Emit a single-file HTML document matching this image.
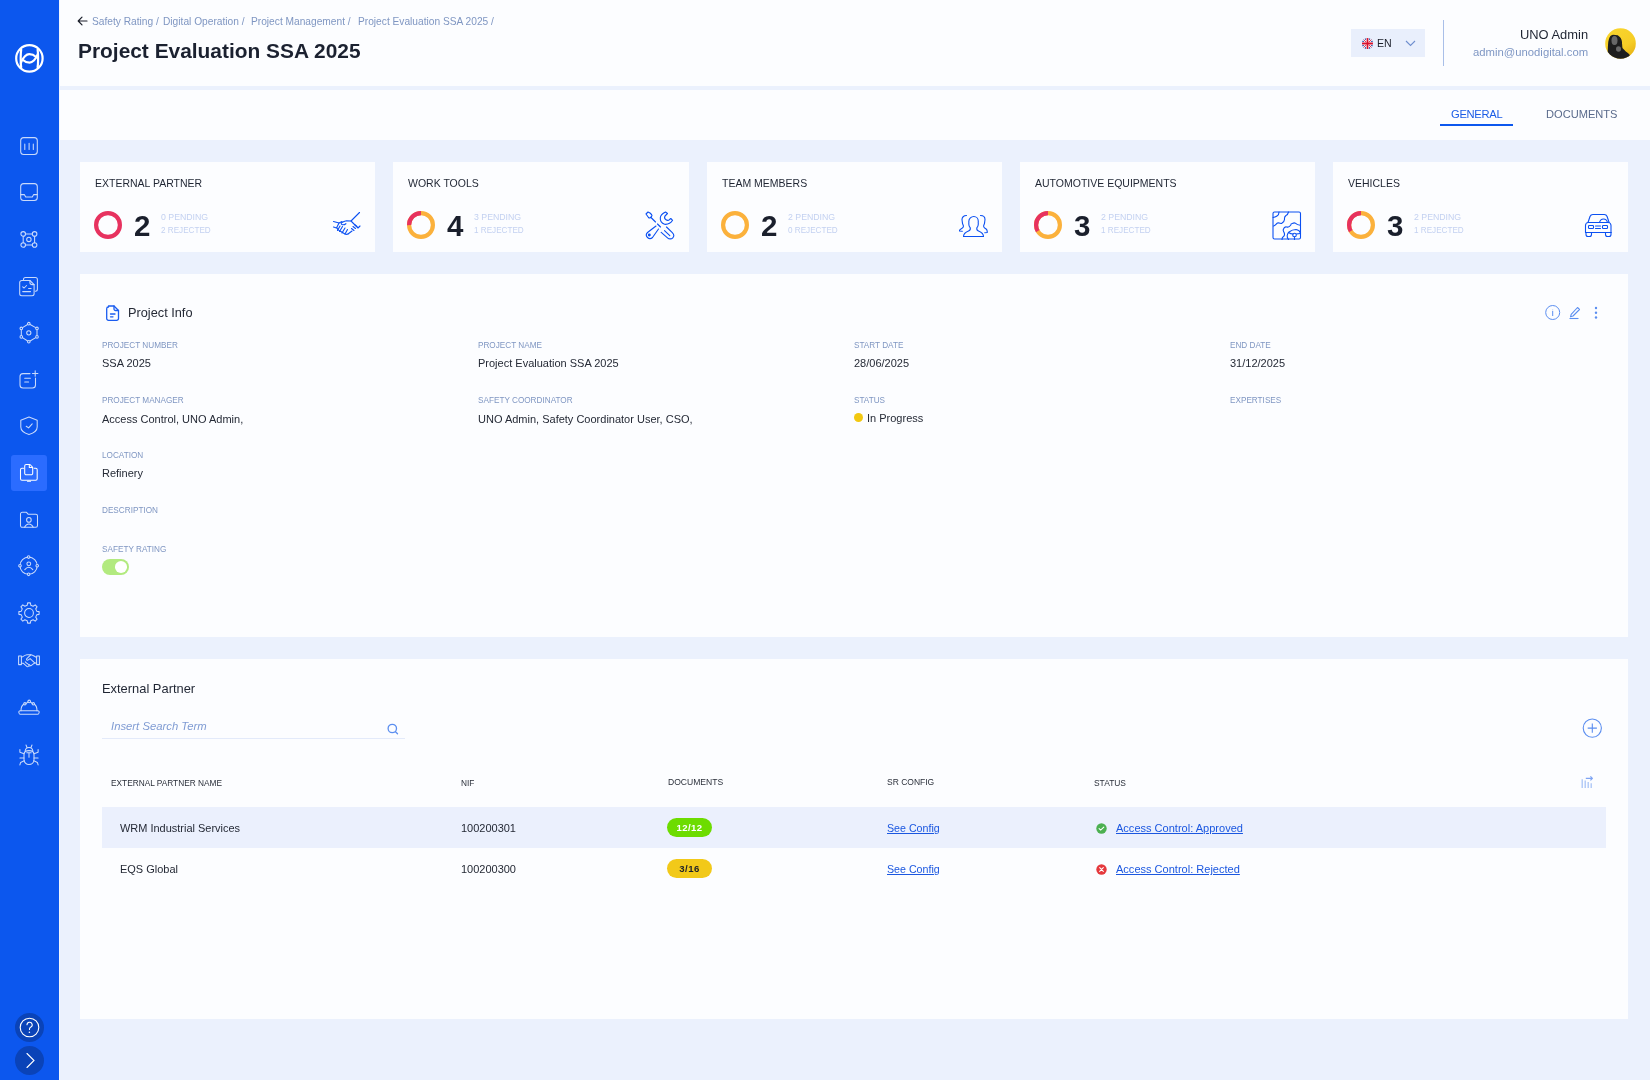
<!DOCTYPE html>
<html><head><meta charset="utf-8"><title>Project Evaluation SSA 2025</title>
<style>
*{box-sizing:border-box;margin:0;padding:0}
html,body{width:1650px;height:1080px;overflow:hidden}
body{font-family:"Liberation Sans",sans-serif;background:#ebf1fd;color:#1f2533;position:relative}
.abs{position:absolute}
.t{position:absolute;white-space:nowrap;line-height:1;will-change:transform}
</style></head>
<body>
<div class="abs" style="left:0px;top:0px;width:59px;height:1080px;background:#0c57ee;"></div>
<div class="abs" style="left:59px;top:0px;width:1px;height:1080px;background:#f1f5fe;"></div>
<div class="abs" style="left:60px;top:0px;width:1590px;height:86px;background:#fcfdff;"></div>
<div class="abs" style="left:60px;top:90px;width:1590px;height:50px;background:#fcfdff;"></div>
<svg class="abs" style="left:14px;top:43px;" width="30" height="30" viewBox="0 0 30 30"><g fill="none" stroke="#fff" stroke-width="2.2" stroke-linecap="round"><circle cx="15.4" cy="15.4" r="13.2"/><path d="M7.2 6.6C6.5 10.5 6.5 20.3 7.2 24.2"/><path d="M23.6 6.6C24.3 10.5 24.3 20.3 23.6 24.2"/><path d="M6.9 20C9 13.8 12.8 11.2 15.2 11.2C18 11.2 20.3 12.3 21.8 13.8"/><path d="M23.9 10.8C21.8 17 18 19.6 15.6 19.6C12.8 19.6 10.5 18.5 9 17"/></g></svg>
<div class="abs" style="left:11px;top:455px;width:36px;height:36px;background:#2b6cff;border-radius:3px;"></div>
<svg class="abs" style="left:16.5px;top:133.5px;" width="24" height="24" viewBox="0 0 24 24"><g fill="none" stroke="#fff" stroke-width="1.05" stroke-linecap="round" stroke-linejoin="round" opacity="0.78"><rect x="3.7" y="3.6" width="16.6" height="16.8" rx="3"/><path d="M7.8 10v5.4M12.1 9.2v6.2M16.3 10v5.4"/></g></svg>
<svg class="abs" style="left:16.5px;top:180.3px;" width="24" height="24" viewBox="0 0 24 24"><g fill="none" stroke="#fff" stroke-width="1.05" stroke-linecap="round" stroke-linejoin="round" opacity="0.78"><rect x="3.7" y="3.6" width="16.6" height="16.8" rx="3"/><path d="M3.7 14.6h3.6l1.4 2.4h6.6l1.4-2.4h3.6"/></g></svg>
<svg class="abs" style="left:16.5px;top:227.0px;" width="24" height="24" viewBox="0 0 24 24"><g fill="none" stroke="#fff" stroke-width="1.05" stroke-linecap="round" stroke-linejoin="round" opacity="0.78"><circle cx="6.2" cy="6.9" r="2.3"/><circle cx="17.6" cy="6.9" r="2.3"/><circle cx="6.2" cy="18" r="2.3"/><circle cx="17.6" cy="18" r="2.3"/><circle cx="11.9" cy="12.4" r="2.2"/><path d="M8.5 6.9h6.8M8.5 18h6.8M6.2 9.2v6.5M17.6 9.2v6.5"/></g></svg>
<svg class="abs" style="left:16.5px;top:273.8px;" width="24" height="24" viewBox="0 0 24 24"><g fill="none" stroke="#fff" stroke-width="1.05" stroke-linecap="round" stroke-linejoin="round" opacity="0.78"><path d="M6.5 5.5a2 2 0 0 1 2-2h9.9a2 2 0 0 1 2 2v9.8a2 2 0 0 1-2 2"/><path d="M4.7 6.5h8.2l4.2 4.1v9.2a2 2 0 0 1-2 2h-10.4a2 2 0 0 1-2-2v-11.3a2 2 0 0 1 2-2z"/><path d="M12.9 6.5v2.1a2 2 0 0 0 2 2h2.2M5.7 12.9l1.4 1.1 2.5-2.5M11.6 14.5h2.5M5.7 17.6h7.8"/></g></svg>
<svg class="abs" style="left:16.5px;top:320.6px;" width="24" height="24" viewBox="0 0 24 24"><g fill="none" stroke="#fff" stroke-width="1.05" stroke-linecap="round" stroke-linejoin="round" opacity="0.78"><path d="M11.8 2.7L20 7.4V15.9L11.8 20.7L4.3 15.9V7.4Z"/><circle cx="11.8" cy="11.8" r="2.1"/><g fill="#0c57ee"><circle cx="11.8" cy="2.7" r="1.3"/><circle cx="20" cy="7.4" r="1.3"/><circle cx="20" cy="15.9" r="1.3"/><circle cx="11.8" cy="20.7" r="1.3"/><circle cx="4.3" cy="15.9" r="1.3"/><circle cx="4.3" cy="7.4" r="1.3"/></g></g></svg>
<svg class="abs" style="left:16.5px;top:367.4px;" width="24" height="24" viewBox="0 0 24 24"><g fill="none" stroke="#fff" stroke-width="1.05" stroke-linecap="round" stroke-linejoin="round" opacity="0.78"><path d="M13 6.6H6a3 3 0 0 0-3 3v8.3a3 3 0 0 0 3 3h9.5a3 3 0 0 0 3-3V11"/><path d="M7.7 11.3h5.7M7.7 14.9h3.9M18.2 3.8v5.4M15.5 6.5h5.4"/></g></svg>
<svg class="abs" style="left:16.5px;top:414.1px;" width="24" height="24" viewBox="0 0 24 24"><g fill="none" stroke="#fff" stroke-width="1.05" stroke-linecap="round" stroke-linejoin="round" opacity="0.78"><path d="M12 3.1L20.2 6.2V13C20.2 16.5 16.5 19.2 12 20.6 7.5 19.2 3.8 16.5 3.8 13V6.2Z"/><path d="M9.2 12.2l2.4 1.7 3.6-4.1"/></g></svg>
<svg class="abs" style="left:16.5px;top:460.9px;" width="24" height="24" viewBox="0 0 24 24"><g fill="none" stroke="#fff" stroke-width="1.05" stroke-linecap="round" stroke-linejoin="round" opacity="1"><path d="M6.5 7.2H5a1.5 1.5 0 0 0-1.5 1.5v9a1.5 1.5 0 0 0 1.5 1.5h13.7a1.5 1.5 0 0 0 1.5-1.5v-9a1.5 1.5 0 0 0-1.5-1.5h-1.5"/><path d="M9.2 3.5h3.8l2.7 2.8v6a1.5 1.5 0 0 1-1.5 1.5h-5a1.5 1.5 0 0 1-1.5-1.5v-7.3a1.5 1.5 0 0 1 1.5-1.5z"/><path d="M12.3 3.6v2.9h3.3M10.5 20.3h3"/></g></svg>
<svg class="abs" style="left:16.5px;top:507.7px;" width="24" height="24" viewBox="0 0 24 24"><g fill="none" stroke="#fff" stroke-width="1.05" stroke-linecap="round" stroke-linejoin="round" opacity="0.78"><path d="M3.5 6a1.7 1.7 0 0 1 1.7-1.7h4.3l1.6 1.9h7.7a1.7 1.7 0 0 1 1.7 1.7v9.7a1.7 1.7 0 0 1-1.7 1.7h-13.6a1.7 1.7 0 0 1-1.7-1.7z"/><circle cx="11.9" cy="11.9" r="2.3"/><path d="M7.6 19.3c.9-2 2.4-3.2 4.3-3.2s3.4 1.2 4.3 3.2"/></g></svg>
<svg class="abs" style="left:16.5px;top:554.4px;" width="24" height="24" viewBox="0 0 24 24"><g fill="none" stroke="#fff" stroke-width="1.05" stroke-linecap="round" stroke-linejoin="round" opacity="0.78"><circle cx="11.6" cy="11.7" r="8.6"/><circle cx="11.8" cy="9.8" r="1.9"/><path d="M7.8 15.6c1.2-1.6 2.5-2.4 4-2.4s2.8.8 4 2.4"/><g fill="#0c57ee"><circle cx="11.6" cy="3.1" r="1.3"/><circle cx="20.2" cy="11.7" r="1.3"/><circle cx="11.6" cy="20.3" r="1.3"/><circle cx="3" cy="11.7" r="1.3"/></g></g></svg>
<svg class="abs" style="left:16.5px;top:601.2px;" width="24" height="24" viewBox="0 0 24 24"><g fill="none" stroke="#fff" stroke-width="1.05" stroke-linecap="round" stroke-linejoin="round" opacity="0.78"><path d="M10.16 4.32 L10.64 1.89 L13.36 1.89 L13.84 4.32 L16.13 5.26 L18.19 3.89 L20.11 5.81 L18.74 7.87 L19.68 10.16 L22.11 10.64 L22.11 13.36 L19.68 13.84 L18.74 16.13 L20.11 18.19 L18.19 20.11 L16.13 18.74 L13.84 19.68 L13.36 22.11 L10.64 22.11 L10.16 19.68 L7.87 18.74 L5.81 20.11 L3.89 18.19 L5.26 16.13 L4.32 13.84 L1.89 13.36 L1.89 10.64 L4.32 10.16 L5.26 7.87 L3.89 5.81 L5.81 3.89 L7.87 5.26Z"/><circle cx="12" cy="12" r="4.4"/></g></svg>
<svg class="abs" style="left:16.5px;top:648.0px;" width="24" height="24" viewBox="0 0 24 24"><g fill="none" stroke="#fff" stroke-width="1.05" stroke-linecap="round" stroke-linejoin="round" opacity="0.78"><rect x="1.6" y="8" width="2.8" height="8.6"/><rect x="19.6" y="8" width="2.8" height="8.6"/><path d="M4.4 9.3C6.5 8.5 8 7 10 6.8h3.8M19.6 9.3C17.6 8.5 16 7 14 6.8"/><path d="M13.8 6.8L9.8 10.6c-.7.8.2 2 1.1 1.5l2.2-1.5 4.9 4.6"/><path d="M4.4 15.2h1.8l3.6 3.2c.6.5 1.4.3 1.7-.3l.3-.4c.5.4 1.2.3 1.5-.2.5.3 1.1.2 1.4-.3l2-1.6 1.2-.6h1.7"/><path d="M8.3 13.8l1.5 1.5M10.4 15.5l1.3 1.3M12.4 16.6l.9.9"/></g></svg>
<svg class="abs" style="left:16.5px;top:694.7px;" width="24" height="24" viewBox="0 0 24 24"><g fill="none" stroke="#fff" stroke-width="1.05" stroke-linecap="round" stroke-linejoin="round" opacity="0.78"><path d="M3.2 15.7h17.6a1.4 1.4 0 0 1 1.3 1.8l-.3.9a1.4 1.4 0 0 1-1.3.9H3.5a1.4 1.4 0 0 1-1.3-.9l-.3-.9a1.4 1.4 0 0 1 1.3-1.8z"/><path d="M4 15.7C4 12.5 5.5 10 6.8 9.3M20 15.7C20 12.5 18.5 10 17.3 9.3M9 8.6 10.9 7M13.5 7 15.1 8.4"/><circle cx="7.9" cy="8.8" r="1.2"/><circle cx="12.2" cy="6.4" r="1.3"/><circle cx="16.3" cy="8.8" r="1.2"/></g></svg>
<svg class="abs" style="left:16.5px;top:741.5px;" width="24" height="24" viewBox="0 0 24 24"><g fill="none" stroke="#fff" stroke-width="1.05" stroke-linecap="round" stroke-linejoin="round" opacity="0.78"><path d="M7 12.5C7 9.8 9.2 8.6 12 8.6S17 9.8 17 12.5V17.5C17 20.5 14.8 22.5 12 22.5S7 20.5 7 17.5Z"/><path d="M8.2 8.9C8.4 6.9 10 5.5 12 5.5S15.6 6.9 15.8 8.9M10.1 5.8 9 3M13.9 5.8 15 3M9.8 10.7H14.2M12 10.7V15.2M2.9 7.6V10.2L7 11.8M21.1 7.6V10.2L17 11.8M2.9 15.9H7M21.1 15.9H17M7.2 18.8 3.6 20.4 2.9 22.9M16.8 18.8 20.4 20.4 21.1 22.9"/></g></svg>
<div class="abs" style="left:15px;top:1013px;width:29px;height:29px;border-radius:50%;background:#0a43b8"></div>
<svg class="abs" style="left:15px;top:1013px;" width="29" height="29" viewBox="0 0 29 29"><circle cx="14.5" cy="14.5" r="9.3" fill="none" stroke="#fff" stroke-width="1.1"/><path d="M12 11.8a2.6 2.6 0 1 1 3.6 2.4c-.8.4-1.1.9-1.1 1.7v.6" fill="none" stroke="#fff" stroke-width="1.1" stroke-linecap="round"/><circle cx="14.4" cy="19.2" r=".8" fill="#fff"/></svg>
<div class="abs" style="left:15px;top:1046px;width:29px;height:29px;border-radius:50%;background:#0a43b8"></div>
<svg class="abs" style="left:15px;top:1046px;" width="29" height="29" viewBox="0 0 29 29"><path d="M12 7.5l7 7-7 7" fill="none" stroke="#fff" stroke-width="1.1" stroke-linecap="round"/></svg>
<svg class="abs" style="left:77px;top:16px;" width="11" height="10" viewBox="0 0 11 10"><path d="M10 5H1.2M5 1.2L1.2 5 5 8.8" fill="none" stroke="#1b1f2a" stroke-width="1.2" stroke-linecap="round" stroke-linejoin="round"/></svg>
<div class="t" style="left:91.80px;top:17.03px;font-size:10.2px;color:#7f96c2;font-weight:normal;font-style:normal;">Safety Rating /</div>
<div class="t" style="left:162.50px;top:17.03px;font-size:10.2px;color:#7f96c2;font-weight:normal;font-style:normal;">Digital Operation /</div>
<div class="t" style="left:251.30px;top:17.03px;font-size:10.2px;color:#7f96c2;font-weight:normal;font-style:normal;">Project Management /</div>
<div class="t" style="left:358.20px;top:17.03px;font-size:10.2px;color:#7f96c2;font-weight:normal;font-style:normal;">Project Evaluation SSA 2025 /</div>
<div class="t" style="left:77.50px;top:40.94px;font-size:20.9px;color:#1b2130;font-weight:bold;font-style:normal;">Project Evaluation SSA 2025</div>
<div class="abs" style="left:1351px;top:29px;width:74px;height:28px;background:#e9effc;"></div>
<svg class="abs" style="left:1362px;top:37.5px;" width="11" height="11" viewBox="0 0 11 11"><defs><clipPath id="fc"><circle cx="5.5" cy="5.5" r="5.5"/></clipPath></defs><g clip-path="url(#fc)"><rect width="11" height="11" fill="#2a4fa8"/><path d="M0 0L11 11M11 0L0 11" stroke="#fff" stroke-width="2.2"/><path d="M0 0L11 11M11 0L0 11" stroke="#d8102c" stroke-width="0.8"/><path d="M5.5 0v11M0 5.5h11" stroke="#fff" stroke-width="3"/><path d="M5.5 0v11M0 5.5h11" stroke="#d8102c" stroke-width="1.8"/></g></svg>
<div class="t" style="left:1376.50px;top:37.99px;font-size:10.6px;color:#1b1f2a;font-weight:normal;font-style:normal;">EN</div>
<svg class="abs" style="left:1405px;top:40px;" width="11" height="7" viewBox="0 0 11 7"><path d="M1 1l4.5 4.5L10 1" fill="none" stroke="#6f8fcf" stroke-width="1.1"/></svg>
<div class="abs" style="left:1443px;top:20px;width:1px;height:46px;background:#a9bfe8;"></div>
<div class="t" style="right:62.00px;top:28.53px;font-size:12.9px;color:#1f2533;font-weight:normal;font-style:normal;">UNO Admin</div>
<div class="t" style="right:62.00px;top:47.00px;font-size:11.3px;color:#7f97c4;font-weight:normal;font-style:normal;">admin@unodigital.com</div>
<svg class="abs" style="left:1605px;top:28px;" width="31" height="31" viewBox="0 0 31 31"><defs><linearGradient id="ag" x1="0.2" y1="0" x2="0.9" y2="1"><stop offset="0" stop-color="#f9d52e"/><stop offset="0.6" stop-color="#f6cd26"/><stop offset="1" stop-color="#e3ac10"/></linearGradient><radialGradient id="fg" cx="0.5" cy="0.5" r="0.5"><stop offset="0" stop-color="#9a9a9a"/><stop offset="1" stop-color="#3a3a3a"/></radialGradient><clipPath id="ac"><circle cx="15.5" cy="15.5" r="15.3"/></clipPath></defs><g clip-path="url(#ac)"><rect width="31" height="31" fill="url(#ag)"/><path d="M2.7 23C3 18 3 14 3.7 12C4.5 8.5 6 6.8 8 6.7L12.7 7.3C14.5 8.5 16 10 16.3 11.3C17 13 17 14 17 15.3C17.3 17.5 17.2 19.5 17.7 20.3C19.5 22.5 22 24.5 24.3 26.3L26 31L0 31Z" fill="#1e1e1e"/><ellipse cx="9.5" cy="12.5" rx="3" ry="4.5" fill="#7a7a7a" opacity="0.8"/><ellipse cx="13.5" cy="21" rx="2.5" ry="2.8" fill="#8a8a8a" opacity="0.7"/></g></svg>
<div class="t" style="left:1451.40px;top:108.78px;font-size:11.2px;color:#1b5ce6;font-weight:normal;font-style:normal;letter-spacing:-0.3px;">GENERAL</div>
<div class="abs" style="left:1440px;top:124px;width:73px;height:2px;background:#0c57ee;"></div>
<div class="t" style="left:1545.80px;top:109.27px;font-size:11.1px;color:#5a6b8c;font-weight:normal;font-style:normal;">DOCUMENTS</div>
<div class="abs" style="left:80px;top:162px;width:295px;height:90px;background:#fcfdff;"></div>
<div class="t" style="left:94.60px;top:178.07px;font-size:10.5px;color:#1f2533;font-weight:normal;font-style:normal;">EXTERNAL PARTNER</div>
<svg class="abs" style="left:93.0px;top:209.8px;" width="30" height="30" viewBox="0 0 30 30"><circle cx="15" cy="15" r="11.9" fill="none" stroke="#e7325f" stroke-width="4.2"/></svg>
<div class="t" style="left:133.80px;top:211.22px;font-size:29.5px;color:#1a1f2c;font-weight:bold;font-style:normal;">2</div>
<div class="t" style="left:160.80px;top:212.86px;font-size:8.75px;color:#c3d1f1;font-weight:normal;font-style:normal;">0 PENDING</div>
<div class="t" style="left:160.80px;top:227.37px;font-size:8.15px;color:#c3d1f1;font-weight:normal;font-style:normal;">2 REJECTED</div>
<svg class="abs" style="left:331.5px;top:210.5px;" width="30" height="30" viewBox="0 0 30 30"><g fill="none" stroke="#0b50f2" stroke-width="1.1" stroke-linecap="round" stroke-linejoin="round"><path d="M1.5 10.5l5.5 1.5 3 -1.5"/><path d="M27.5 1.5l-8.5 8.5 7 7 2-2"/><path d="M19 10l-4.5-.3c-2 .3-3.5 1-5 2-.6.5-.3 1.8.8 2 1.3.2 2.6-.2 3.6-1"/><path d="M7 12l-2.5 5-3 -1"/><path d="M5 17c.5 1.5 1.5 2.5 3 3 l5 3c1 .5 2 .5 3 0"/><path d="M8 15l-2.5 4.5M10.5 15.5l-3 5M13 17l-3 5M15.5 18.5l-2.5 4.5"/><path d="M22.5 13.5l2.5 2M21 15.5l2.5 2M19.5 17.5l2.5 2M16 23l4-3"/></g></svg>
<div class="abs" style="left:393px;top:162px;width:296px;height:90px;background:#fcfdff;"></div>
<div class="t" style="left:407.60px;top:178.07px;font-size:10.5px;color:#1f2533;font-weight:normal;font-style:normal;">WORK TOOLS</div>
<svg class="abs" style="left:406.0px;top:209.8px;" width="30" height="30" viewBox="0 0 30 30"><circle cx="15" cy="15" r="11.9" fill="none" stroke="#fbb13c" stroke-width="4.2"/><circle cx="15" cy="15" r="11.9" fill="none" stroke="#e7325f" stroke-width="4.2" stroke-dasharray="18.69 74.77" transform="rotate(-90 15 15) scale(1 -1) translate(0 -30)"/></svg>
<div class="t" style="left:446.80px;top:211.22px;font-size:29.5px;color:#1a1f2c;font-weight:bold;font-style:normal;">4</div>
<div class="t" style="left:473.80px;top:212.86px;font-size:8.75px;color:#c3d1f1;font-weight:normal;font-style:normal;">3 PENDING</div>
<div class="t" style="left:473.80px;top:227.37px;font-size:8.15px;color:#c3d1f1;font-weight:normal;font-style:normal;">1 REJECTED</div>
<svg class="abs" style="left:644.5px;top:210.5px;" width="30" height="30" viewBox="0 0 30 30"><g fill="none" stroke="#0b50f2" stroke-width="1.1" stroke-linecap="round" stroke-linejoin="round"><path d="M1 3l2-2 2 1 1.5 1.5c.5 .5 .5 1.5 0 2l-1 1c-.5.5-1.5.5-2 0z"/><path d="M6 6.5l4.5 4.5M12.5 13l3 3"/><path d="M11 15l-8.5 6.5c-1.5 1.5-1.5 3.5 0 5 1.5 1.5 3.5 1.5 5 0L13.5 18"/><circle cx="4.3" cy="24" r="0.9" fill="#0b50f2"/><path d="M20.5 1l2 1.5-2.5 2.5c-.8 1.5-.3 3 1 3.8 1.3.8 2.8.5 3.8-.5l1-.8 1.8 1.8c-2 3-5 4.3-8 4c-3.2-1-4.5-3.5-4.3-6.5.2-2.5 2.5-4.5 5.2-5.8z"/><path d="M21.5 16L27.3 21.6C29 23.3 29 25.5 27.8 26.8C26.5 28.2 24 28.2 22.5 26.8L16.2 21.4"/><path d="M19.5 19.6L24.8 24.7"/></g></svg>
<div class="abs" style="left:707px;top:162px;width:295px;height:90px;background:#fcfdff;"></div>
<div class="t" style="left:721.60px;top:178.07px;font-size:10.5px;color:#1f2533;font-weight:normal;font-style:normal;">TEAM MEMBERS</div>
<svg class="abs" style="left:720.0px;top:209.8px;" width="30" height="30" viewBox="0 0 30 30"><circle cx="15" cy="15" r="11.9" fill="none" stroke="#fbb13c" stroke-width="4.2"/></svg>
<div class="t" style="left:760.80px;top:211.22px;font-size:29.5px;color:#1a1f2c;font-weight:bold;font-style:normal;">2</div>
<div class="t" style="left:787.80px;top:212.86px;font-size:8.75px;color:#c3d1f1;font-weight:normal;font-style:normal;">2 PENDING</div>
<div class="t" style="left:787.80px;top:227.37px;font-size:8.15px;color:#c3d1f1;font-weight:normal;font-style:normal;">0 REJECTED</div>
<svg class="abs" style="left:958.5px;top:210.5px;" width="30" height="30" viewBox="0 0 30 30"><g fill="none" stroke="#0b50f2" stroke-width="1.1" stroke-linecap="round" stroke-linejoin="round"><path d="M8 25.5c0-3.5 2.5-4.5 5-5.5 1.5-.5 2-1.5 1.8-3-1-1-1.5-2.5-1.5-4 0-1 .2-1.5 0-2.5 0-3 2.5-5 5-5s4.5 2 4.5 5c-.2 1 0 1.5 0 2.5 0 1.5-.5 3-1.5 4-.2 1.5.2 2.5 1.7 3 2.5 1 5 2 5 5.5z" transform="translate(-3.5 0)"/><path d="M7.5 4.5c-3 0-4.5 2-4.5 4 0 1 .3 1.5.3 2.5 0 1 .5 2.5 1 3.5.3 1-.2 2-1 2.5-1.5.8-3 1.5-3 3l3 .3"/><path d="M21.5 4.5c3 0 4.5 2 4.5 4 0 1-.3 1.5-.3 2.5 0 1-.5 2.5-1 3.5-.3 1 .2 2 1 2.5 1.5.8 2.5 1.5 2.5 3v1.5l-2.5.3"/></g></svg>
<div class="abs" style="left:1020px;top:162px;width:295px;height:90px;background:#fcfdff;"></div>
<div class="t" style="left:1034.60px;top:178.07px;font-size:10.5px;color:#1f2533;font-weight:normal;font-style:normal;">AUTOMOTIVE EQUIPMENTS</div>
<svg class="abs" style="left:1033.0px;top:209.8px;" width="30" height="30" viewBox="0 0 30 30"><circle cx="15" cy="15" r="11.9" fill="none" stroke="#fbb13c" stroke-width="4.2"/><circle cx="15" cy="15" r="11.9" fill="none" stroke="#e7325f" stroke-width="4.2" stroke-dasharray="24.92 74.77" transform="rotate(-90 15 15) scale(1 -1) translate(0 -30)"/></svg>
<div class="t" style="left:1073.80px;top:211.22px;font-size:29.5px;color:#1a1f2c;font-weight:bold;font-style:normal;">3</div>
<div class="t" style="left:1100.80px;top:212.86px;font-size:8.75px;color:#c3d1f1;font-weight:normal;font-style:normal;">2 PENDING</div>
<div class="t" style="left:1100.80px;top:227.37px;font-size:8.15px;color:#c3d1f1;font-weight:normal;font-style:normal;">1 REJECTED</div>
<svg class="abs" style="left:1271.5px;top:210.5px;" width="30" height="30" viewBox="0 0 30 30"><g fill="none" stroke="#0b50f2" stroke-width="1.1" stroke-linecap="round" stroke-linejoin="round"><rect x="1" y="1" width="27.5" height="27" rx="1.5"/><path d="M1 6.5c2.5-.5 4.5-1 5.5-3l.5-2.5"/><path d="M1.5 15c1.5.2 2.5-2 4-3 1.5-.5 3 .5 4 .5 1.5-1 3-2 3-4s-.5-2.5 1.5-4c1.5-.5 2-1.5 2.5-3.5"/><path d="M10 28.5c0-1.5.5-2.5 1.5-3 1-.5 1.2-2 .8-3.5-.5-1.5-1.5-2-1-3.5.5-1.5 2-3 3.5-2.5 1.5.5 3-.5 4-2 0-1 .5-1.5 1.5-1.5 1-.5 2-1 3-.3 1 1 2.5 2 5 2"/><path d="M16.5 28.5c-1-1.3-1.5-2.5-1.3-4 .3-1.5.5-2.5 1.8-3.5 2-1.5 4-2.5 7-2.5 2.5.3 4 2 4.5 3.5"/><path d="M16.5 21.5c1.5 1 3 1.5 4.5 1.5M24.5 23c1-.5 2.5-.5 4-.5"/><circle cx="22.5" cy="24" r="1.8"/><path d="M22.5 26v2.5"/></g></svg>
<div class="abs" style="left:1333px;top:162px;width:295px;height:90px;background:#fcfdff;"></div>
<div class="t" style="left:1347.60px;top:178.07px;font-size:10.5px;color:#1f2533;font-weight:normal;font-style:normal;">VEHICLES</div>
<svg class="abs" style="left:1346.0px;top:209.8px;" width="30" height="30" viewBox="0 0 30 30"><circle cx="15" cy="15" r="11.9" fill="none" stroke="#fbb13c" stroke-width="4.2"/><circle cx="15" cy="15" r="11.9" fill="none" stroke="#e7325f" stroke-width="4.2" stroke-dasharray="24.92 74.77" transform="rotate(-90 15 15) scale(1 -1) translate(0 -30)"/></svg>
<div class="t" style="left:1386.80px;top:211.22px;font-size:29.5px;color:#1a1f2c;font-weight:bold;font-style:normal;">3</div>
<div class="t" style="left:1413.80px;top:212.86px;font-size:8.75px;color:#c3d1f1;font-weight:normal;font-style:normal;">2 PENDING</div>
<div class="t" style="left:1413.80px;top:227.37px;font-size:8.15px;color:#c3d1f1;font-weight:normal;font-style:normal;">1 REJECTED</div>
<svg class="abs" style="left:1583px;top:209.5px;" width="30" height="30" viewBox="0 0 30 30"><g fill="none" stroke="#0b50f2" stroke-width="1.1" stroke-linecap="round" stroke-linejoin="round"><path d="M5 12.5l2-6c.5-1.2 1.5-2 2.8-2h11.5c1.3 0 2.3.8 2.8 2l2 6"/><path d="M2.5 22.5v-7c0-1.5 1.2-3 2.7-3h20c1.5 0 2.8 1.5 2.8 3v7"/><path d="M2.5 22.5h25.5"/><path d="M3 22.5v2c0 1 .8 2 2 2h1.5c1 0 2-1 2-2v-2M22.5 22.5v2c0 1 .8 2 2 2h1.5c1 0 2-1 2-2v-2"/><rect x="5.5" y="15.5" width="5" height="3" rx="0.8"/><rect x="19.5" y="15.5" width="5" height="3" rx="0.8"/><path d="M12.5 16h5M12.5 18.5h5"/><path d="M16.5 12.5c.5-2 2-3.5 4-3.5s3.5 1.5 4 3.5"/></g></svg>
<div class="abs" style="left:80px;top:274px;width:1548px;height:363px;background:#fcfdff;"></div>
<svg class="abs" style="left:106px;top:305px;" width="14" height="16" viewBox="0 0 14 16"><g fill="none" stroke="#1a5cf0" stroke-width="1.3" stroke-linejoin="round" stroke-linecap="round"><path d="M2.5 1h5.5l4.5 4.5v8a1.8 1.8 0 0 1-1.8 1.8h-8.2a1.8 1.8 0 0 1-1.8-1.8v-9.7a1.8 1.8 0 0 1 1.8-1.8z"/><path d="M8 1v3a1.5 1.5 0 0 0 1.5 1.5h3M4.5 9h4.5M4.5 11.8h2.5"/></g></svg>
<div class="t" style="left:127.50px;top:306.66px;font-size:12.75px;color:#252a36;font-weight:normal;font-style:normal;">Project Info</div>
<svg class="abs" style="left:1545px;top:305px;" width="16" height="16" viewBox="0 0 16 16"><g fill="none" stroke="#5b8ef0" stroke-width="1"><circle cx="7.7" cy="7.5" r="7"/><path d="M7.7 4.2v0.3M7.7 5.8v5.2"/></g></svg>
<svg class="abs" style="left:1569px;top:306px;" width="12" height="14" viewBox="0 0 12 14"><g fill="none" stroke="#5b8ef0" stroke-width="1.1" stroke-linejoin="round"><path d="M8.5 1.5l2 2-6.5 6.5-2.5.8.7-2.5z"/><path d="M0.5 12.5h9"/></g></svg>
<svg class="abs" style="left:1594px;top:306px;" width="4" height="14" viewBox="0 0 4 14"><g fill="#5b8ef0"><circle cx="2" cy="2" r="1.2"/><circle cx="2" cy="6.8" r="1.2"/><circle cx="2" cy="11.5" r="1.2"/></g></svg>
<div class="t" style="left:102.00px;top:341.53px;font-size:8.2px;color:#7f96c2;font-weight:normal;font-style:normal;">PROJECT NUMBER</div>
<div class="t" style="left:102.00px;top:358.15px;font-size:11.0px;color:#252a36;font-weight:normal;font-style:normal;">SSA 2025</div>
<div class="t" style="left:478.00px;top:341.53px;font-size:8.2px;color:#7f96c2;font-weight:normal;font-style:normal;">PROJECT NAME</div>
<div class="t" style="left:478.00px;top:358.15px;font-size:11.0px;color:#252a36;font-weight:normal;font-style:normal;">Project Evaluation SSA 2025</div>
<div class="t" style="left:854.00px;top:341.53px;font-size:8.2px;color:#7f96c2;font-weight:normal;font-style:normal;">START DATE</div>
<div class="t" style="left:854.00px;top:358.15px;font-size:11.0px;color:#252a36;font-weight:normal;font-style:normal;">28/06/2025</div>
<div class="t" style="left:1230.00px;top:341.53px;font-size:8.2px;color:#7f96c2;font-weight:normal;font-style:normal;">END DATE</div>
<div class="t" style="left:1230.00px;top:358.15px;font-size:11.0px;color:#252a36;font-weight:normal;font-style:normal;">31/12/2025</div>
<div class="t" style="left:102.00px;top:396.93px;font-size:8.2px;color:#7f96c2;font-weight:normal;font-style:normal;">PROJECT MANAGER</div>
<div class="t" style="left:102.00px;top:413.55px;font-size:11.0px;color:#252a36;font-weight:normal;font-style:normal;">Access Control, UNO Admin,</div>
<div class="t" style="left:478.00px;top:396.93px;font-size:8.2px;color:#7f96c2;font-weight:normal;font-style:normal;">SAFETY COORDINATOR</div>
<div class="t" style="left:478.00px;top:413.55px;font-size:11.0px;color:#252a36;font-weight:normal;font-style:normal;">UNO Admin, Safety Coordinator User, CSO,</div>
<div class="t" style="left:854.00px;top:396.93px;font-size:8.2px;color:#7f96c2;font-weight:normal;font-style:normal;">STATUS</div>
<div class="t" style="left:1230.00px;top:396.93px;font-size:8.2px;color:#7f96c2;font-weight:normal;font-style:normal;">EXPERTISES</div>
<div class="abs" style="left:854px;top:413px;width:9px;height:9px;border-radius:50%;background:#f2c811"></div>
<div class="t" style="left:867.00px;top:412.95px;font-size:11.0px;color:#252a36;font-weight:normal;font-style:normal;">In Progress</div>
<div class="t" style="left:102.00px;top:451.83px;font-size:8.2px;color:#7f96c2;font-weight:normal;font-style:normal;">LOCATION</div>
<div class="t" style="left:102.00px;top:468.45px;font-size:11.0px;color:#252a36;font-weight:normal;font-style:normal;">Refinery</div>
<div class="t" style="left:102.00px;top:506.93px;font-size:8.2px;color:#7f96c2;font-weight:normal;font-style:normal;">DESCRIPTION</div>
<div class="t" style="left:102.00px;top:545.63px;font-size:8.2px;color:#7f96c2;font-weight:normal;font-style:normal;">SAFETY RATING</div>
<div class="abs" style="left:102px;top:559px;width:27px;height:16px;border-radius:8px;background:#b2ea7f"></div>
<div class="abs" style="left:114.5px;top:561px;width:12.5px;height:12px;border-radius:50%;background:#fff"></div>
<div class="abs" style="left:80px;top:659px;width:1548px;height:360px;background:#fcfdff;"></div>
<div class="t" style="left:102.40px;top:683.03px;font-size:12.9px;color:#1f2533;font-weight:normal;font-style:normal;">External Partner</div>
<div class="t" style="left:110.90px;top:721.20px;font-size:11.3px;color:#7f9bd3;font-weight:normal;font-style:italic;">Insert Search Term</div>
<svg class="abs" style="left:387px;top:723px;" width="12" height="12" viewBox="0 0 12 12"><g fill="none" stroke="#5b8ef0" stroke-width="1.3" stroke-linecap="round"><circle cx="5.3" cy="5.5" r="4.2"/><path d="M8.5 8.8l2 2"/></g></svg>
<div class="abs" style="left:102px;top:738px;width:303px;height:1px;background:#e3eafa;"></div>
<svg class="abs" style="left:1582px;top:718px;" width="21" height="21" viewBox="0 0 21 21"><g fill="none" stroke="#5b8ef0" stroke-width="1.1"><circle cx="10.3" cy="10.1" r="9.1"/><path d="M10.3 5.5v9.2M5.7 10.1h9.2"/></g></svg>
<svg class="abs" style="left:1580.5px;top:775px;" width="13" height="13" viewBox="0 0 13 13"><g fill="none" stroke-width="1.3"><path d="M1.2 4.3v8.6M4.2 5.5v7.4M7.2 7v5.9M10.2 8.3v4.6" stroke="#a9c3f6"/><path d="M4.8 3.3h6.5M9.4 1.3l2 2-2 2" stroke="#7ea4f3" stroke-linejoin="round" stroke-width="1.2"/></g></svg>
<div class="t" style="left:110.90px;top:778.65px;font-size:8.3px;color:#2a2f3a;font-weight:normal;font-style:normal;">EXTERNAL PARTNER NAME</div>
<div class="t" style="left:460.70px;top:778.65px;font-size:8.3px;color:#2a2f3a;font-weight:normal;font-style:normal;">NIF</div>
<div class="t" style="left:667.50px;top:778.42px;font-size:8.57px;color:#2a2f3a;font-weight:normal;font-style:normal;">DOCUMENTS</div>
<div class="t" style="left:886.80px;top:778.48px;font-size:8.5px;color:#2a2f3a;font-weight:normal;font-style:normal;">SR CONFIG</div>
<div class="t" style="left:1094.10px;top:778.53px;font-size:8.43px;color:#2a2f3a;font-weight:normal;font-style:normal;">STATUS</div>
<div class="abs" style="left:102px;top:807px;width:1504px;height:41px;background:#ebf0fd;"></div>
<div class="t" style="left:119.90px;top:823.17px;font-size:10.98px;color:#252a36;font-weight:normal;font-style:normal;">WRM Industrial Services</div>
<div class="t" style="left:460.70px;top:823.16px;font-size:10.99px;color:#252a36;font-weight:normal;font-style:normal;">100200301</div>
<div class="abs" style="left:667px;top:818.0px;width:45px;height:19px;border-radius:9.5px;background:#6ddc00"></div>
<div class="t" style="left:667.00px;top:822.74px;font-size:9.6px;color:#fff;font-weight:bold;font-style:normal;letter-spacing:0.4px;width:45px;text-align:center;">12/12</div>
<div class="t" style="left:886.60px;top:822.83px;font-size:10.67px;color:#1b57e0;font-weight:normal;font-style:normal;text-decoration:underline;">See Config</div>
<svg class="abs" style="left:1096px;top:823.3px;" width="11" height="11" viewBox="0 0 11 11"><circle cx="5.5" cy="5.5" r="5.2" fill="#4cb051"/><path d="M3.1 5.6l1.6 1.5 3.1-3" fill="none" stroke="#fff" stroke-width="1.1" stroke-linecap="round"/></svg>
<div class="t" style="left:1115.90px;top:822.52px;font-size:11.04px;color:#1b57e0;font-weight:normal;font-style:normal;text-decoration:underline;">Access Control: Approved</div>
<div class="t" style="left:119.90px;top:864.17px;font-size:10.98px;color:#252a36;font-weight:normal;font-style:normal;">EQS Global</div>
<div class="t" style="left:460.70px;top:864.16px;font-size:10.99px;color:#252a36;font-weight:normal;font-style:normal;">100200300</div>
<div class="abs" style="left:667px;top:859.2px;width:45px;height:19px;border-radius:9.5px;background:#f2c919"></div>
<div class="t" style="left:667.00px;top:863.74px;font-size:9.6px;color:#1b1f2a;font-weight:bold;font-style:normal;letter-spacing:0.4px;width:45px;text-align:center;">3/16</div>
<div class="t" style="left:886.60px;top:863.83px;font-size:10.67px;color:#1b57e0;font-weight:normal;font-style:normal;text-decoration:underline;">See Config</div>
<svg class="abs" style="left:1096px;top:864.3px;" width="11" height="11" viewBox="0 0 11 11"><circle cx="5.5" cy="5.5" r="5.2" fill="#e5393d"/><path d="M3.7 3.7l3.6 3.6M7.3 3.7l-3.6 3.6" fill="none" stroke="#fff" stroke-width="1.1" stroke-linecap="round"/></svg>
<div class="t" style="left:1115.90px;top:863.52px;font-size:11.04px;color:#1b57e0;font-weight:normal;font-style:normal;text-decoration:underline;">Access Control: Rejected</div>
</body></html>
